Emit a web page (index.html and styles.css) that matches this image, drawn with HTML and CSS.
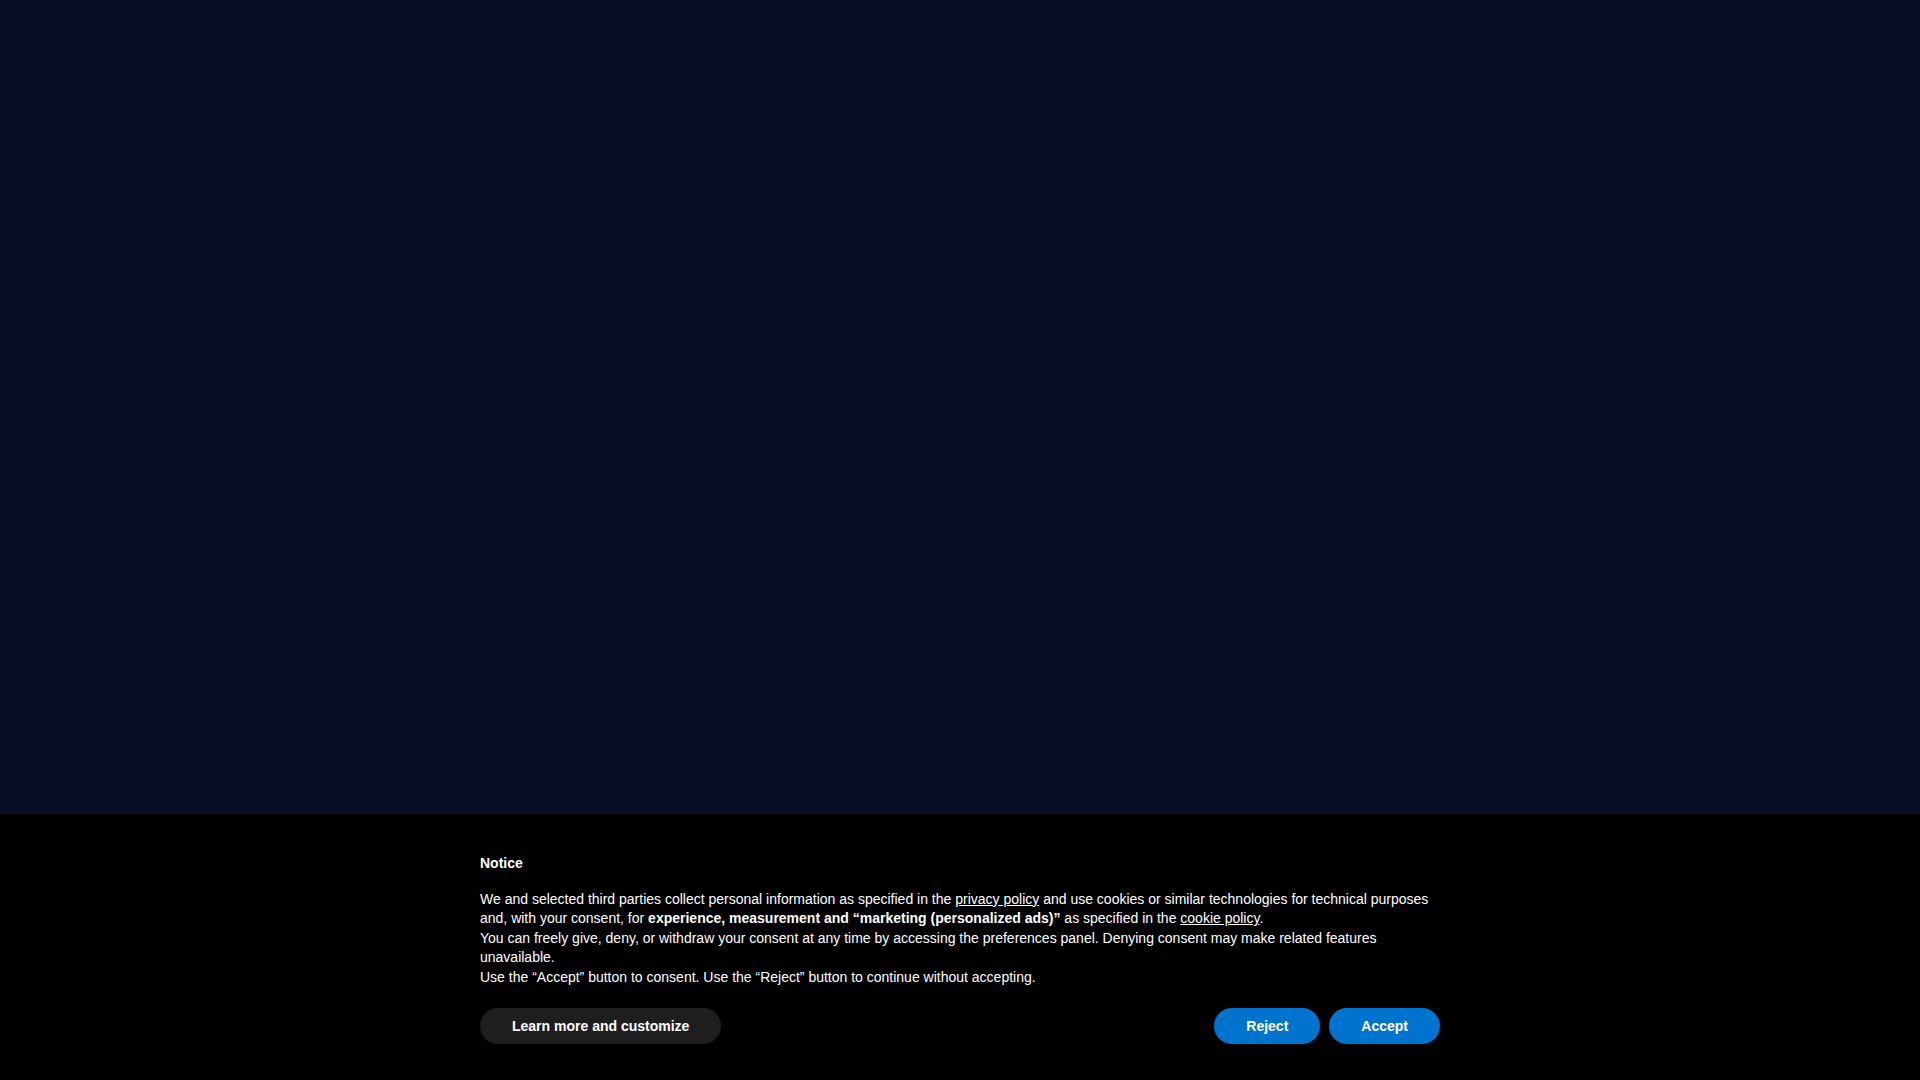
FILE: index.html
```html
<!DOCTYPE html>
<html lang="en">
<head>
<meta charset="utf-8">
<title>Notice</title>
<link rel="stylesheet" href="styles.css">
</head>
<body>
<div class="page">
  <main class="stage"></main>
  <section class="banner">
    <div class="banner-inner">
      <div class="title">Notice</div>
      <div class="desc">
        <p>We and selected third parties collect personal information as specified in the <a href="#">privacy policy</a> and use cookies or similar technologies for technical purposes and, with your consent, for <b>experience, measurement and “marketing (personalized ads)”</b> as specified in the <a href="#">cookie policy</a>.</p>
        <p>You can freely give, deny, or withdraw your consent at any time by accessing the preferences panel. Denying consent may make related features unavailable.</p>
        <p>Use the “Accept” button to consent. Use the “Reject” button to continue without accepting.</p>
      </div>
      <div class="actions">
        <button class="btn btn-more">Learn more and customize</button>
        <div class="actions-right">
          <button class="btn btn-primary">Reject</button>
          <button class="btn btn-primary">Accept</button>
        </div>
      </div>
    </div>
  </section>
</div>
</body>
</html>
```

FILE: styles.css
```css
html, body {
  margin: 0;
  padding: 0;
  height: 100%;
}
body {
  background: #050e23;
  font-family: "Liberation Sans", Arial, sans-serif;
  color: #fff;
}
.page {
  display: flex;
  flex-direction: column;
  height: 100vh;
}
.stage {
  flex: 1;
  background: #050e23;
}
.banner {
  background: #000;
  height: 266px;
  box-sizing: border-box;
  padding-top: 40px;
}
.banner-inner {
  width: 960px;
  margin: 0 auto;
  font-size: 14px;
  line-height: 1.4;
}
.title {
  font-weight: bold;
  margin-bottom: 16px;
}
.desc p {
  margin: 0;
}
.desc a {
  color: #fff;
  text-decoration: underline;
}
.actions {
  display: flex;
  justify-content: space-between;
  align-items: center;
  margin-top: 20px;
}
.actions-right {
  display: flex;
  gap: 9px;
}
.btn {
  font-family: "Liberation Sans", Arial, sans-serif;
  font-size: 14px;
  font-weight: bold;
  line-height: 20px;
  padding: 8px 32px;
  border: 0;
  border-radius: 64px;
  color: #fff;
  cursor: pointer;
}
.btn-more {
  background: #1e1e1e;
}
.btn-primary {
  background: #0073ce;
}
```
